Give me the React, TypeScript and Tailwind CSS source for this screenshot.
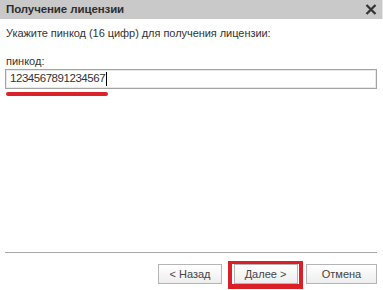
import React from "react";

export default function App() {
  return (
    <div
      className="w-[383px] h-[290px] bg-white flex flex-col overflow-hidden text-[#333333]"
      style={{ fontFamily: '"Liberation Sans", Arial, sans-serif' }}
    >
      <div className="h-[19px] bg-[#c9c9c9] flex items-center justify-between pl-[6px] pr-[4px] border-r border-r-[#e6e6e6]">
        <span className="text-[11.5px] font-bold leading-none text-[#2e2e2e] tracking-[-0.1px]">Получение лицензии</span>
        <svg width="12" height="11" viewBox="0 0 12 11" className="mr-[1px]">
          <path d="M1.5 1 L10.5 10 M10.5 1 L1.5 10" stroke="#333" strokeWidth="2.3" />
        </svg>
      </div>
      <div className="flex-1 flex flex-col px-[5px]">
        <div className="mt-[7px] text-[11px] leading-[14px] pl-[1px] tracking-[-0.05px]">
          Укажите пинкод (16 цифр) для получения лицензии:
        </div>
        <div className="mt-[15px] text-[11px] leading-[13px] pl-[1px]">пинкод:</div>
        <div className="mt-[1px] h-[20px] w-[372px] border border-[#a3a3a3] shadow-[inset_0_0_0_1px_#e8e8e8] flex items-center pl-[4px]">
          <span className="text-[11.5px] leading-none tracking-[-0.45px]">1234567891234567</span>
          <span className="ml-[1px] w-[1px] h-[14px] bg-black" />
        </div>
        <div className="mt-[3px] ml-[1px] h-[4px] w-[102px] rounded-full bg-[#d8232a]" />
        <div className="flex-1" />
        <div className="h-px w-[372px] bg-[#a8a8a8]" />
        <div className="mt-[8px] mb-[1px] h-[28px] flex items-start justify-end pr-[1px]">
          <button className="mt-[3px] h-[20px] w-[64px] border border-[#b4b4b4] bg-gradient-to-b from-white to-[#eeeeee] text-[11px] text-[#444] leading-none">
            &lt; Назад
          </button>
          <div className="ml-[6px] h-[28px] w-[75px] border-x-4 border-t-[3px] border-b-[5px] border-[#dc1f26] flex items-start justify-center">
            <button className="h-[20px] w-[64px] border border-[#b4b4b4] bg-gradient-to-b from-white to-[#eeeeee] text-[11px] text-[#444] leading-none">
              Далее &gt;
            </button>
          </div>
          <button className="ml-[3px] mt-[3px] h-[20px] w-[71px] border border-[#b4b4b4] bg-gradient-to-b from-white to-[#eeeeee] text-[11px] text-[#444] leading-none">
            Отмена
          </button>
        </div>
      </div>
    </div>
  );
}
